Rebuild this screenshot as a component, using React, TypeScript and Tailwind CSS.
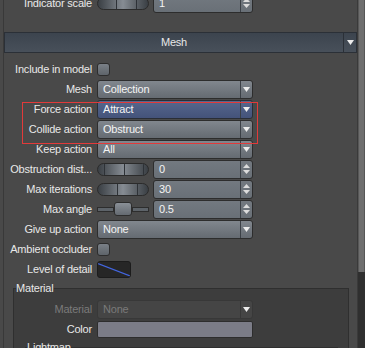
import React from "react";

const DownArrow = ({ color = "#ececec" }: { color?: string }) => (
  <svg width="7" height="5" viewBox="0 0 7 5">
    <path d="M0 0H7L3.5 5Z" fill={color} />
  </svg>
);

const Spinner = () => (
  <div className="flex h-full w-[12px] shrink-0 flex-col items-center justify-center gap-[2px] border-l border-[#3b4046]">
    <svg width="7" height="4" viewBox="0 0 7 4">
      <path d="M3.5 0L7 4H0Z" fill="#dcdcdc" />
    </svg>
    <svg width="7" height="4" viewBox="0 0 7 4">
      <path d="M0 0H7L3.5 4Z" fill="#dcdcdc" />
    </svg>
  </div>
);

function Row({
  label,
  children,
  labelW = "w-[88px]",
  dim = false,
}: {
  label: string;
  children?: React.ReactNode;
  labelW?: string;
  dim?: boolean;
}) {
  return (
    <div className="flex h-5 shrink-0 items-center gap-[5px]">
      <div
        className={`${labelW} shrink-0 whitespace-nowrap text-right leading-none ${
          dim ? "text-[#7a7a7a]" : "text-[#e8e8e8]"
        }`}
      >
        {label}
      </div>
      {children}
    </div>
  );
}

function Dropdown({ value, variant = "normal" }: { value: string; variant?: "normal" | "blue" | "disabled" }) {
  const box =
    variant === "blue"
      ? "bg-linear-to-b from-[#56678d] to-[#44537a] border-[#2a2e36]"
      : variant === "disabled"
      ? "bg-[#454545] border-[#383838]"
      : "bg-linear-to-b from-[#81878e] to-[#656b72] border-[#2d2d2d]";
  const txt = variant === "disabled" ? "text-[#7a7a7a]" : "text-[#f4f4f4]";
  const sep = variant === "disabled" ? "border-[#383838]" : "border-[#3b4046]";
  return (
    <div className={`flex h-[19px] w-[156px] shrink-0 items-center rounded-[3px] border ${box}`}>
      <div className={`flex-1 pl-[5px] leading-none ${txt}`}>{value}</div>
      <div className={`flex h-full w-[12px] items-center justify-center border-l ${sep}`}>
        <DownArrow />
      </div>
    </div>
  );
}

function Jog({ segs }: { segs: number[] }) {
  return (
    <div className="flex h-[13px] w-[52px] shrink-0 overflow-hidden rounded-full border border-[#2b2b2b] bg-linear-to-r from-[#3a3f44] via-[#868c93] to-[#3a3f44]">
      {segs.map((w, i) => (
        <div key={i} style={{ width: w }} className="h-full shrink-0 border-r border-[#2e3237] last:border-r-0" />
      ))}
    </div>
  );
}

function NumberBox({ value }: { value: string }) {
  return (
    <div className="flex h-[19px] w-[100px] shrink-0 items-center rounded-[3px] border border-[#2d2d2d] bg-linear-to-b from-[#737980] to-[#697077]">
      <div className="flex-1 pl-[5px] leading-none text-[#f4f4f4]">{value}</div>
      <Spinner />
    </div>
  );
}

function Slider() {
  return (
    <div className="flex h-[15px] w-[52px] shrink-0 items-center">
      <div className="h-[5px] w-[17px] border border-[#2d2d2d] bg-[#5d6369]" />
      <div className="h-[14px] w-[18px] rounded-[3px] border border-[#2d2d2d] bg-linear-to-b from-[#8a9097] to-[#646a71]" />
      <div className="h-[5px] w-[17px] border border-[#2d2d2d] bg-[#5d6369]" />
    </div>
  );
}

function Checkbox() {
  return (
    <div className="h-[13px] w-[13px] shrink-0 rounded-[3px] border border-[#2d2d2d] bg-linear-to-b from-[#7a8087] to-[#5e646a]" />
  );
}

export default function App() {
  return (
    <div className="flex h-[348px] w-[365px] overflow-hidden bg-[#494949] font-['Liberation_Sans',Arial,sans-serif] text-[11px] tracking-[-0.2px]">
      <div className="w-[3px] shrink-0" />
      <div className="flex w-[354px] shrink-0 flex-col overflow-hidden border-l border-[#393939]">
        <div className="mt-[-7px]">
          <Row label="Indicator scale">
            <div className="flex items-center gap-[4px]">
              <Jog segs={[19, 20, 13]} />
              <NumberBox value="1" />
            </div>
          </Row>
        </div>

        <div className="mt-[19px] flex h-[21px] shrink-0 items-stretch border border-[#2b3037] bg-linear-to-b from-[#3c444e] to-[#48505a]">
          <div className="flex flex-1 items-center justify-center leading-none text-[#e8e8e8]">Mesh</div>
          <div className="flex w-[13px] items-center justify-center border-l border-[#2b3037]">
            <DownArrow />
          </div>
        </div>

        <div className="mt-[6px] flex flex-col">
          <Row label="Include in model">
            <Checkbox />
          </Row>
          <Row label="Mesh">
            <Dropdown value="Collection" />
          </Row>
          <div className="relative">
            <Row label="Force action">
              <Dropdown value="Attract" variant="blue" />
            </Row>
            <Row label="Collide action">
              <Dropdown value="Obstruct" />
            </Row>
            <div className="pointer-events-none absolute left-[18px] top-[3px] h-[42px] w-[236px] border border-[#e23a3a]" />
          </div>
          <Row label="Keep action">
            <Dropdown value="All" />
          </Row>
          <Row label="Obstruction dist...">
            <div className="flex items-center gap-[4px]">
              <Jog segs={[7, 20, 19, 6]} />
              <NumberBox value="0" />
            </div>
          </Row>
          <Row label="Max iterations">
            <div className="flex items-center gap-[4px]">
              <Jog segs={[20, 20, 12]} />
              <NumberBox value="30" />
            </div>
          </Row>
          <Row label="Max angle">
            <div className="flex items-center gap-[4px]">
              <Slider />
              <NumberBox value="0.5" />
            </div>
          </Row>
          <Row label="Give up action">
            <Dropdown value="None" />
          </Row>
          <Row label="Ambient occluder">
            <Checkbox />
          </Row>
          <Row label="Level of detail">
            <div className="h-[17px] w-[34px] shrink-0 overflow-hidden rounded-[3px] border border-[#1c1c1c] bg-[#262626]">
              <svg width="32" height="15" viewBox="0 0 32 15">
                <line x1="0" y1="1.5" x2="32" y2="14" stroke="#4366e0" strokeWidth="1.2" />
              </svg>
            </div>
          </Row>
        </div>

        <fieldset className="ml-[9px] mr-[8px] mt-[3px] shrink-0 border border-[#2f2f2f] bg-[#3d3d3d] pb-[20px]">
          <legend className="ml-[2px] leading-[13px] text-[#e8e8e8]">Material</legend>
          <div className="flex flex-col pt-[4px]">
            <Row label="Material" labelW="w-[78px]" dim>
              <Dropdown value="None" variant="disabled" />
            </Row>
            <Row label="Color" labelW="w-[78px]">
              <div className="h-[17px] w-[156px] shrink-0 rounded-[2px] border border-[#2d2d2d] bg-[#7b7c87]" />
            </Row>
            <fieldset className="ml-[11px] mr-[10px] mt-[2px] border border-[#2f2f2f] pb-[20px]">
              <legend className="ml-[1px] leading-[13px] text-[#e8e8e8]">Lightmap</legend>
            </fieldset>
          </div>
        </fieldset>
      </div>
      <div className="w-[1px] shrink-0 bg-[#3a3a3a]" />
      <div className="flex w-[7px] shrink-0 flex-col">
        <div className="flex h-[272px] shrink-0 bg-[#575757] pl-[1px]">
          <div className="h-full w-[5px] bg-[#6f6f6f]" />
        </div>
        <div className="flex-1 bg-[#2f2f2f]" />
      </div>
    </div>
  );
}
